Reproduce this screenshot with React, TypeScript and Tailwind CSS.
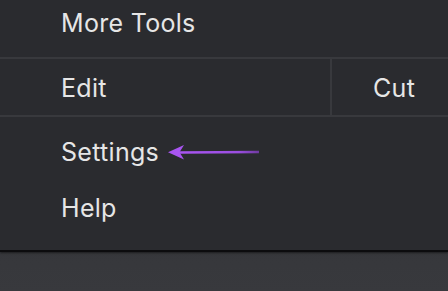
import React from 'react';

const font = { fontFamily: 'Inter, "Liberation Sans", sans-serif' };

const Arrow: React.FC = () => (
  <svg width="94" height="18" viewBox="0 0 94 18" className="ml-[8px] shrink-0">
    <defs>
      <linearGradient id="shaft" x1="0" y1="0" x2="1" y2="0">
        <stop offset="0" stopColor="#a955f2" />
        <stop offset="0.75" stopColor="#9a4ee0" />
        <stop offset="1" stopColor="#6f3aa0" />
      </linearGradient>
    </defs>
    <line x1="12" y1="9.5" x2="92" y2="9" stroke="url(#shaft)" strokeWidth="2.4" />
    <path d="M1 9.2 L17 2 L12.5 9.2 L17 16.4 Z" fill="#a955f2" />
  </svg>
);

const App: React.FC = () => {
  return (
    <div
      className="w-[448px] h-[291px] overflow-hidden bg-gradient-to-b from-[#2d2e32] to-[#38393d] text-[#e6e6e6]"
      style={font}
    >
      <div className="h-[252px] bg-[#2a2b2f] border-b-2 border-[#0c0c0e] flex flex-col shadow-[0_1px_2px_rgba(0,0,0,0.5)]">
        {/* More Tools */}
        <div className="h-[57px] flex items-center pb-[10px] pl-[61px] text-[25px] leading-[25px] tracking-[0.3px]">
          More Tools
        </div>
        <div className="h-[2px] bg-[#38393d]" />

        {/* Edit / Cut */}
        <div className="h-[56px] flex">
          <div className="w-[330px] flex items-center pt-[3px] pl-[61px] text-[25px] leading-[25px] tracking-[0.3px]">
            Edit
          </div>
          <div className="w-[2px] bg-[#38393d]" />
          <div className="flex-1 flex items-center pt-[3px] pl-[41px] text-[25px] leading-[25px] tracking-[0.3px]">
            Cut
          </div>
        </div>
        <div className="h-[2px] bg-[#38393d]" />

        {/* Settings / Help */}
        <div className="pt-[7px] flex flex-col">
          <div className="h-[56px] flex items-center pl-[61px] text-[25px] leading-[25px] tracking-[0.3px]">
            <span>Settings</span>
            <Arrow />
          </div>
          <div className="h-[56px] flex items-center pl-[61px] text-[25px] leading-[25px] tracking-[0.3px]">
            Help
          </div>
        </div>
        <div className="flex-1" />
      </div>
    </div>
  );
};

export default App;
